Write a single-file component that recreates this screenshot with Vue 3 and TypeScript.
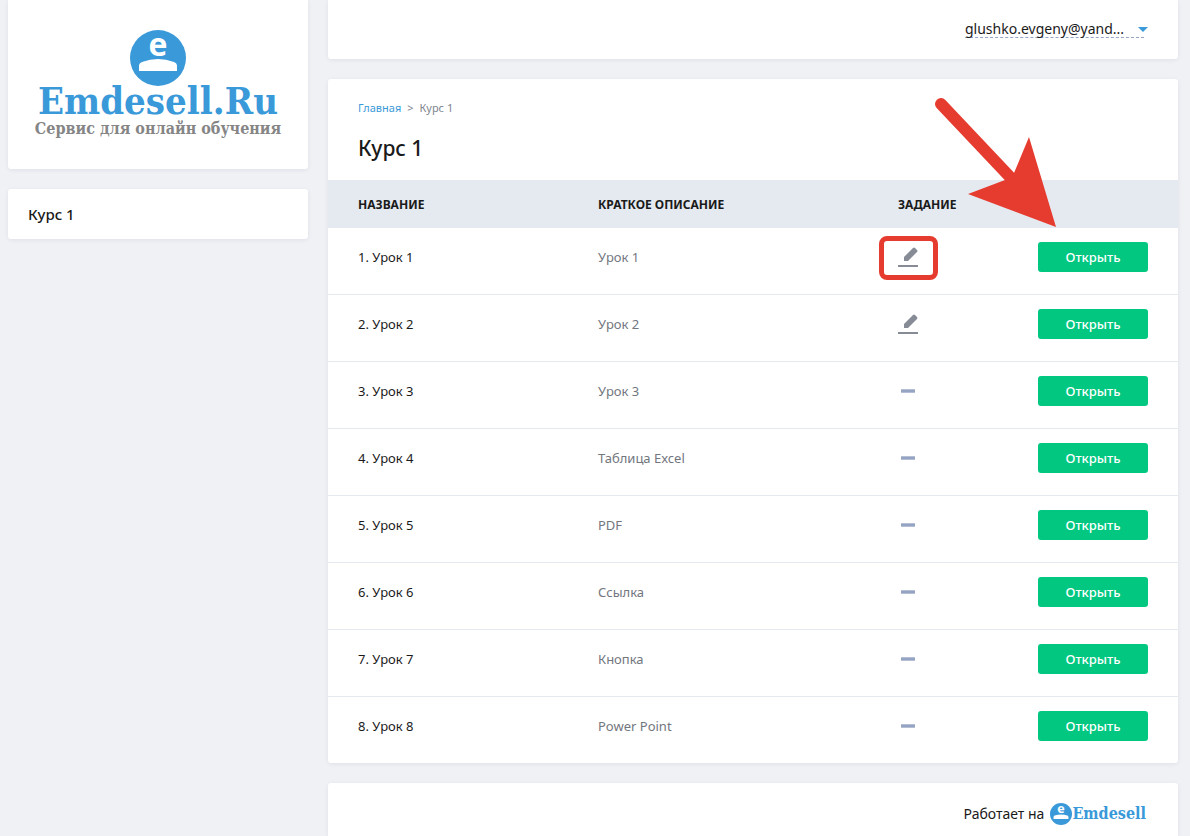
<script setup lang="ts">
interface Lesson {
  id: number
  title: string
  description: string
  hasTask: boolean
  highlighted?: boolean
}

const courseTitle = 'Курс 1'

const lessons: Lesson[] = [
  { id: 1, title: 'Урок 1', description: 'Урок 1', hasTask: true, highlighted: true },
  { id: 2, title: 'Урок 2', description: 'Урок 2', hasTask: true },
  { id: 3, title: 'Урок 3', description: 'Урок 3', hasTask: false },
  { id: 4, title: 'Урок 4', description: 'Таблица Excel', hasTask: false },
  { id: 5, title: 'Урок 5', description: 'PDF', hasTask: false },
  { id: 6, title: 'Урок 6', description: 'Ссылка', hasTask: false },
  { id: 7, title: 'Урок 7', description: 'Кнопка', hasTask: false },
  { id: 8, title: 'Урок 8', description: 'Power Point', hasTask: false },
]
</script>

<template>
  <div class="page">
    <aside class="sidebar">
      <a class="card logo" href="#">
        <svg class="logo-mark" viewBox="0 0 56 56" aria-hidden="true">
          <circle cx="28" cy="28" r="28" fill="#3a99d9" />
          <path d="M9 41V36Q9 33 12 32Q28 26 44 32Q47 33 47 36V41Z" fill="#fff" />
          <text x="28" y="26" text-anchor="middle" class="mark-letter">e</text>
        </svg>
        <span class="logo-name">Emdesell.Ru</span>
        <span class="logo-tagline">Сервис для онлайн обучения</span>
      </a>
      <nav class="card menu">
        <a href="#">{{ courseTitle }}</a>
      </nav>
    </aside>

    <div class="content">
      <header class="card topbar">
        <button class="user" type="button">
          <span class="user-name">glushko.evgeny@yand...</span>
          <svg class="caret" viewBox="0 0 10 5" aria-hidden="true"><path d="M0 0H10L5 5Z" fill="#3a99d9" /></svg>
        </button>
      </header>

      <main class="card course">
        <nav class="crumbs">
          <a href="#">Главная</a>
          <span>&gt;</span>
          <span>{{ courseTitle }}</span>
        </nav>
        <h1>{{ courseTitle }}</h1>
        <table>
          <thead>
            <tr>
              <th class="col-name">Название</th>
              <th class="col-desc">Краткое описание</th>
              <th class="col-task">Задание</th>
              <th class="col-action"></th>
            </tr>
          </thead>
          <tbody>
            <tr v-for="lesson in lessons" :key="lesson.id">
              <td class="name">{{ lesson.id }}. {{ lesson.title }}</td>
              <td class="desc">{{ lesson.description }}</td>
              <td>
                <span class="task" :class="{ highlighted: lesson.highlighted }">
                  <svg v-if="lesson.hasTask" viewBox="0 0 20 30" aria-label="Задание">
                    <path d="M6 19V15L15 6Q16 5 17 6L19 8Q20 9 19 10L10 19Z" fill="#868b95" />
                    <path d="M0 23H20V25H0Z" fill="#868b95" />
                  </svg>
                  <svg v-else viewBox="0 0 20 30" aria-label="Нет задания">
                    <path d="M3 13H17V17H3Z" fill="#b4bfd5" />
                    <path d="M3 14H17V16H3Z" fill="#94a4c2" />
                  </svg>
                </span>
              </td>
              <td><button class="open" type="button">Открыть</button></td>
            </tr>
          </tbody>
        </table>
        <svg class="arrow" viewBox="0 0 124 132" aria-hidden="true">
          <path d="M7 7L76 80" stroke="#e63c30" stroke-width="12" stroke-linecap="round" />
          <path d="M95 40L122 130L34 97L71 83L80 76Z" fill="#e63c30" />
        </svg>
      </main>

      <footer class="card footer">
        <span>Работает на</span>
        <a class="brand" href="#">
          <svg class="brand-mark" viewBox="0 0 56 56" aria-hidden="true">
            <circle cx="28" cy="28" r="28" fill="#3a99d9" />
            <path d="M9 41V36Q9 33 12 32Q28 26 44 32Q47 33 47 36V41Z" fill="#fff" />
            <text x="28" y="26" text-anchor="middle" class="mark-letter">e</text>
          </svg>
          <span>Emdesell</span>
        </a>
      </footer>
    </div>
  </div>
</template>

<style>
body {
  margin: 0;
  background: #f0f1f5;
}
</style>

<style scoped>
.page {
  box-sizing: border-box;
  min-height: 100vh;
  display: grid;
  grid-template-columns: 300px minmax(0, 1fr);
  gap: 20px;
  padding: 0 12px 0 8px;
  font-family: "Noto Sans", "Open Sans", sans-serif;
  font-size: 14px;
  color: #1a1a1a;
}
a {
  color: inherit;
  text-decoration: none;
}
button {
  font: inherit;
  border: 0;
  padding: 0;
  cursor: pointer;
}
.card {
  background: #fff;
  border-radius: 3px;
  box-shadow: 0 1px 4px rgba(30, 40, 80, 0.08);
}
.sidebar,
.content {
  display: flex;
  flex-direction: column;
  gap: 20px;
}
.logo {
  display: flex;
  flex-direction: column;
  align-items: center;
  padding: 30px 0 31px;
  border-radius: 0 0 3px 3px;
}
.logo-mark {
  display: block;
  width: 56px;
  height: 56px;
  overflow: visible;
}
.mark-letter {
  font: bold 32px "Open Sans", sans-serif;
  fill: #fff;
}
.logo-name {
  margin-top: -4px;
  font: bold 38px/38px "DejaVu Serif Condensed", "DejaVu Serif", serif;
  color: #3a99d9;
}
.logo-tagline {
  font: bold 16px/18px "DejaVu Serif Condensed", "DejaVu Serif", serif;
  color: #858585;
}
.menu {
  padding: 0 20px;
  font-size: 15px;
  font-weight: 500;
  line-height: 50px;
}
.menu a {
  display: block;
}
.topbar {
  display: flex;
  justify-content: flex-end;
  padding: 20px 30px 21px;
  border-radius: 0 0 3px 3px;
}
.user {
  display: flex;
  align-items: center;
  background: none;
  color: inherit;
  line-height: 18px;
}
.user-name {
  width: 179px;
  height: 17px;
  text-align: left;
  border-bottom: 1px dashed #94a4c2;
}
.caret {
  width: 10px;
  height: 5px;
  margin-left: -6px;
}
.course {
  position: relative;
}
.crumbs {
  display: flex;
  gap: 6px;
  padding: 20px 30px 0;
  font-size: 11px;
  line-height: 18px;
  color: #808690;
}
.crumbs a {
  color: #3a99d9;
}
h1 {
  margin: 0;
  padding: 16px 30px 17px;
  font-size: 21px;
  line-height: 30px;
  font-weight: 500;
}
table {
  width: 100%;
  table-layout: fixed;
  border-collapse: collapse;
}
th {
  height: 48px;
  padding: 0;
  background: #e5eaf1;
  font-size: 12px;
  font-weight: 700;
  text-align: left;
  text-transform: uppercase;
}
.col-name {
  width: 240px;
  padding-left: 30px;
}
.col-task,
.col-action {
  width: 140px;
}
td {
  height: 30px;
  padding: 14px 0 22px;
  line-height: 30px;
  vertical-align: top;
}
tbody tr + tr td {
  border-top: 1px solid #e5eaf1;
}
.name {
  padding-left: 30px;
  font-size: 13px;
}
.desc {
  font-size: 13px;
  color: #72767e;
}
.task {
  position: relative;
  display: block;
  width: 20px;
  height: 30px;
}
.task svg {
  display: block;
  width: 20px;
  height: 30px;
}
.highlighted::after {
  content: "";
  position: absolute;
  inset: -6px -20px -8px -19px;
  border: 5px solid #e63c30;
  border-radius: 8px;
}
.open {
  display: block;
  width: 110px;
  height: 30px;
  border-radius: 3px;
  background: #02c780;
  color: #fff;
  font-size: 13px;
  font-weight: 500;
  line-height: 30px;
}
.arrow {
  position: absolute;
  top: 18px;
  right: 120px;
  width: 124px;
  height: 132px;
}
.footer {
  flex: 1;
  display: flex;
  justify-content: flex-end;
  align-items: flex-start;
  gap: 6px;
  padding: 20px 32px 0;
  border-radius: 3px 3px 0 0;
  line-height: 22px;
}
.brand {
  display: flex;
  font: bold 16px/22px "DejaVu Serif Condensed", "DejaVu Serif", serif;
  color: #3a99d9;
}
.brand-mark {
  width: 22px;
  height: 22px;
  overflow: visible;
}
</style>
